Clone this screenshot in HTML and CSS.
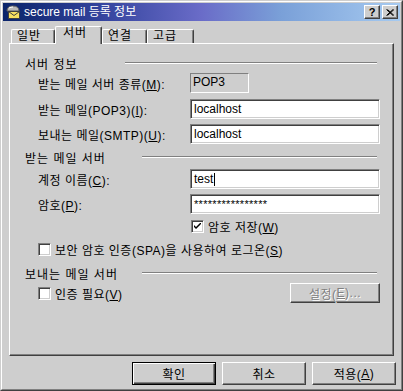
FILE: index.html
```html
<!DOCTYPE html>
<html>
<head>
<meta charset="utf-8" />
<title>secure mail 등록 정보</title>
<link rel="stylesheet" href="styles.css">
</head>
<body>
<div class="window">
<div class="frame">

<div class="titlebar">
  <svg class="app-icon" width="16" height="16" viewBox="0 0 16 16">
    <path d="M2 7 Q2 2 8 2 Q14 2 14 7 Z" fill="#b8b8b8" stroke="#606060" stroke-width="1"/>
    <path d="M4 4 Q6 3 8 3" fill="none" stroke="#ffffff" stroke-width="1"/>
    <rect x="3.5" y="7.5" width="11" height="7" fill="#f8e060" stroke="#404040" stroke-width="1"/>
    <path d="M3.5 7.5 L9 11.5 L14.5 7.5" fill="none" stroke="#404040" stroke-width="1"/>
  </svg>
  <span class="title">secure mail 등록 정보</span>
  <span class="caption-btns">
    <span class="cbtn help">?</span>
    <span class="cbtn">
      <svg width="8" height="7" viewBox="0 0 8 7"><path d="M0.5 0.5 L7 6.5 M1.5 0.5 L8 6.5 M7 0.5 L0.5 6.5 M8 0.5 L1.5 6.5" stroke="#000" stroke-width="1"/></svg>
    </span>
  </span>
</div>

<div class="dialog">
  <div class="tabs">
    <div class="tab tab-general">일반</div>
    <div class="tab tab-server selected">서버</div>
    <div class="tab tab-conn">연결</div>
    <div class="tab tab-adv">고급</div>
  </div>

  <div class="panel">
    <div class="group-head">
      <span>서버 정보</span>
      <i class="etch etch-wide"></i>
    </div>
    <div class="field-row gap-3">
      <label>받는 메일 서버 종류(<u>M</u>):</label>
      <div class="static">POP3</div>
    </div>
    <div class="field-row gap-6">
      <label>받는 메일(POP3)(<u>I</u>):</label>
      <div class="edit">localhost</div>
    </div>
    <div class="field-row gap-5">
      <label>보내는 메일(SMTP)(<u>U</u>):</label>
      <div class="edit">localhost</div>
    </div>

    <div class="group-head gap-6">
      <span>받는 메일 서버</span>
      <i class="etch etch-narrow"></i>
    </div>
    <div class="field-row gap-5">
      <label>계정 이름(<u>C</u>):</label>
      <div class="edit">test<span class="caret"></span></div>
    </div>
    <div class="field-row gap-5">
      <label>암호(<u>P</u>):</label>
      <div class="edit secret">****************</div>
    </div>
    <div class="field-row check-row gap-4">
      <span></span>
      <div class="check-item">
        <span class="checkbox">
          <svg width="7" height="7" viewBox="0 0 7 7"><path d="M0 2 L0 4 L2 6 L7 1 L7 -1 L2 4 Z" fill="#000"/></svg>
        </span>
        <span>암호 저장(<u>W</u>)</span>
      </div>
    </div>
    <div class="check-item spa gap-12">
      <span class="checkbox"></span>
      <span>보안 암호 인증(SPA)을 사용하여 로그온(<u>S</u>)</span>
    </div>

    <div class="group-head gap-10">
      <span>보내는 메일 서버</span>
      <i class="etch etch-narrow"></i>
    </div>
    <div class="field-row gap-3">
      <div class="check-item">
        <span class="checkbox"></span>
        <span>인증 필요(<u>V</u>)</span>
      </div>
      <div class="btn settings" >설정(<u>E</u>)...</div>
    </div>
  </div>

  <div class="actions">
    <div class="btn push default">확인</div>
    <div class="btn push">취소</div>
    <div class="btn push">적용(<u>A</u>)</div>
  </div>
</div>

</div>
</div>
</body>
</html>
```

FILE: styles.css
```css
body {
  margin: 0;
  background: #cecece;
  font-family: "Liberation Sans", "Noto Sans CJK KR", sans-serif;
  font-size: 12px;
  color: #000;
}

.window {
  width: 403px;
  height: 391px;
  box-sizing: border-box;
  border: 1px solid;
  border-color: #cecece #404040 #404040 #cecece;
  background: #cecece;
}

.frame {
  height: 100%;
  box-sizing: border-box;
  border: 1px solid;
  border-color: #ffffff #808080 #808080 #ffffff;
  padding: 1px;
}

/* caption */
.titlebar {
  height: 18px;
  display: flex;
  align-items: center;
  padding: 0 2px 0 2px;
  background: linear-gradient(to right, #0a246a 0%, #34449e 25%, #6a6cc8 50%, #7aa0d8 70%, #a6caf0 100%);
  color: #fff;
}

.app-icon {
  flex: none;
  margin-right: 3px;
}

.title {
  flex: 1;
  line-height: 18px;
  white-space: nowrap;
}

.caption-btns {
  display: flex;
  gap: 2px;
}

.cbtn {
  width: 16px;
  height: 14px;
  box-sizing: border-box;
  background: #cecece;
  border: 1px solid;
  border-color: #ffffff #404040 #404040 #ffffff;
  box-shadow: inset -1px -1px #808080;
  display: flex;
  align-items: center;
  justify-content: center;
  color: #000;
}

.cbtn.help {
  font-weight: bold;
  font-size: 11px;
  line-height: 12px;
}

/* body of the dialog */
.dialog {
  padding: 0 4px 0 6px;
}

.tabs {
  display: flex;
  align-items: flex-end;
  height: 17px;
  margin-top: 5px;
  padding-left: 2px;
  letter-spacing: 1px;
}

.tab {
  height: 14px;
  box-sizing: border-box;
  border-top: 1px solid #fff;
  border-left: 1px solid #fff;
  border-right: 1px solid #404040;
  box-shadow: inset -1px 0 #808080;
  border-radius: 2px 2px 0 0;
  padding-left: 5px;
  line-height: 13px;
  background: #cecece;
}

.tab-general { width: 44px; }
.tab-conn { width: 45px; }
.tab-adv { width: 47px; }

.tab.selected {
  position: relative;
  z-index: 1;
  width: 47px;
  height: 18px;
  margin-bottom: -1px;
  padding-left: 7px;
  line-height: 12px;
}

.panel {
  width: 385px;
  height: 313px;
  box-sizing: border-box;
  border: 1px solid;
  border-color: #ffffff #404040 #404040 #ffffff;
  box-shadow: inset -1px -1px #808080;
  padding: 12px 0 0 15px;
}

.group-head {
  width: 352px;
  height: 14px;
  display: flex;
  align-items: center;
  white-space: nowrap;
  letter-spacing: 1px;
}

.etch {
  margin-left: auto;
  height: 0;
  border-top: 1px solid #808080;
  border-bottom: 1px solid #ffffff;
}

.etch-wide { width: 252px; }
.etch-narrow { width: 235px; }

.gap-3 { margin-top: 3px; }
.gap-4 { margin-top: 4px; }
.gap-5 { margin-top: 5px; }
.gap-6 { margin-top: 6px; }
.gap-10 { margin-top: 10px; }
.gap-12 { margin-top: 12px; }

.field-row {
  display: grid;
  grid-template-columns: 152px 190px;
  align-items: center;
  height: 20px;
  margin-left: 13px;
}

.field-row label {
  white-space: nowrap;
  letter-spacing: 0.5px;
}

.static {
  width: 59px;
  height: 20px;
  box-sizing: border-box;
  border: 1px solid;
  border-color: #808080 #ffffff #ffffff #808080;
  padding-left: 2px;
  line-height: 16px;
}

.edit {
  height: 20px;
  box-sizing: border-box;
  background: #fff;
  border: 1px solid;
  border-color: #808080 #ffffff #ffffff #808080;
  box-shadow: inset 1px 1px #404040, inset -1px -1px #cecece;
  padding-left: 3px;
  line-height: 17px;
  display: flex;
  align-items: center;
}

.edit.secret {
  font-size: 11px;
  letter-spacing: 0.3px;
}

.caret {
  width: 1px;
  height: 13px;
  background: #000;
  margin-left: 1px;
}

.check-row {
  height: 13px;
}

.check-item {
  display: flex;
  align-items: center;
  gap: 4px;
  white-space: nowrap;
  letter-spacing: 0.5px;
}

.check-row .check-item {
  margin-left: 1px;
}

.check-item.spa {
  margin-left: 13px;
  height: 13px;
}

.checkbox {
  width: 13px;
  height: 13px;
  box-sizing: border-box;
  background: #fff;
  border: 1px solid;
  border-color: #808080 #ffffff #ffffff #808080;
  box-shadow: inset 1px 1px #404040, inset -1px -1px #cecece;
  display: flex;
  align-items: center;
  justify-content: center;
  flex: none;
}

.btn {
  box-sizing: border-box;
  background: #cecece;
  border: 1px solid;
  border-color: #ffffff #404040 #404040 #ffffff;
  box-shadow: inset -1px -1px #808080;
  display: flex;
  align-items: center;
  justify-content: center;
  white-space: nowrap;
  letter-spacing: 0.5px;
}

.btn.settings {
  width: 90px;
  height: 20px;
  justify-self: end;
  color: #808080;
  text-shadow: 1px 1px #ffffff;
}

.actions {
  display: flex;
  justify-content: flex-end;
  gap: 6px;
  margin-top: 6px;
}

.btn.push {
  width: 84px;
  height: 23px;
}

.btn.default {
  border: 1px solid #000;
  box-shadow: inset 1px 1px #ffffff, inset -1px -1px #404040, inset -2px -2px #808080;
}
```
